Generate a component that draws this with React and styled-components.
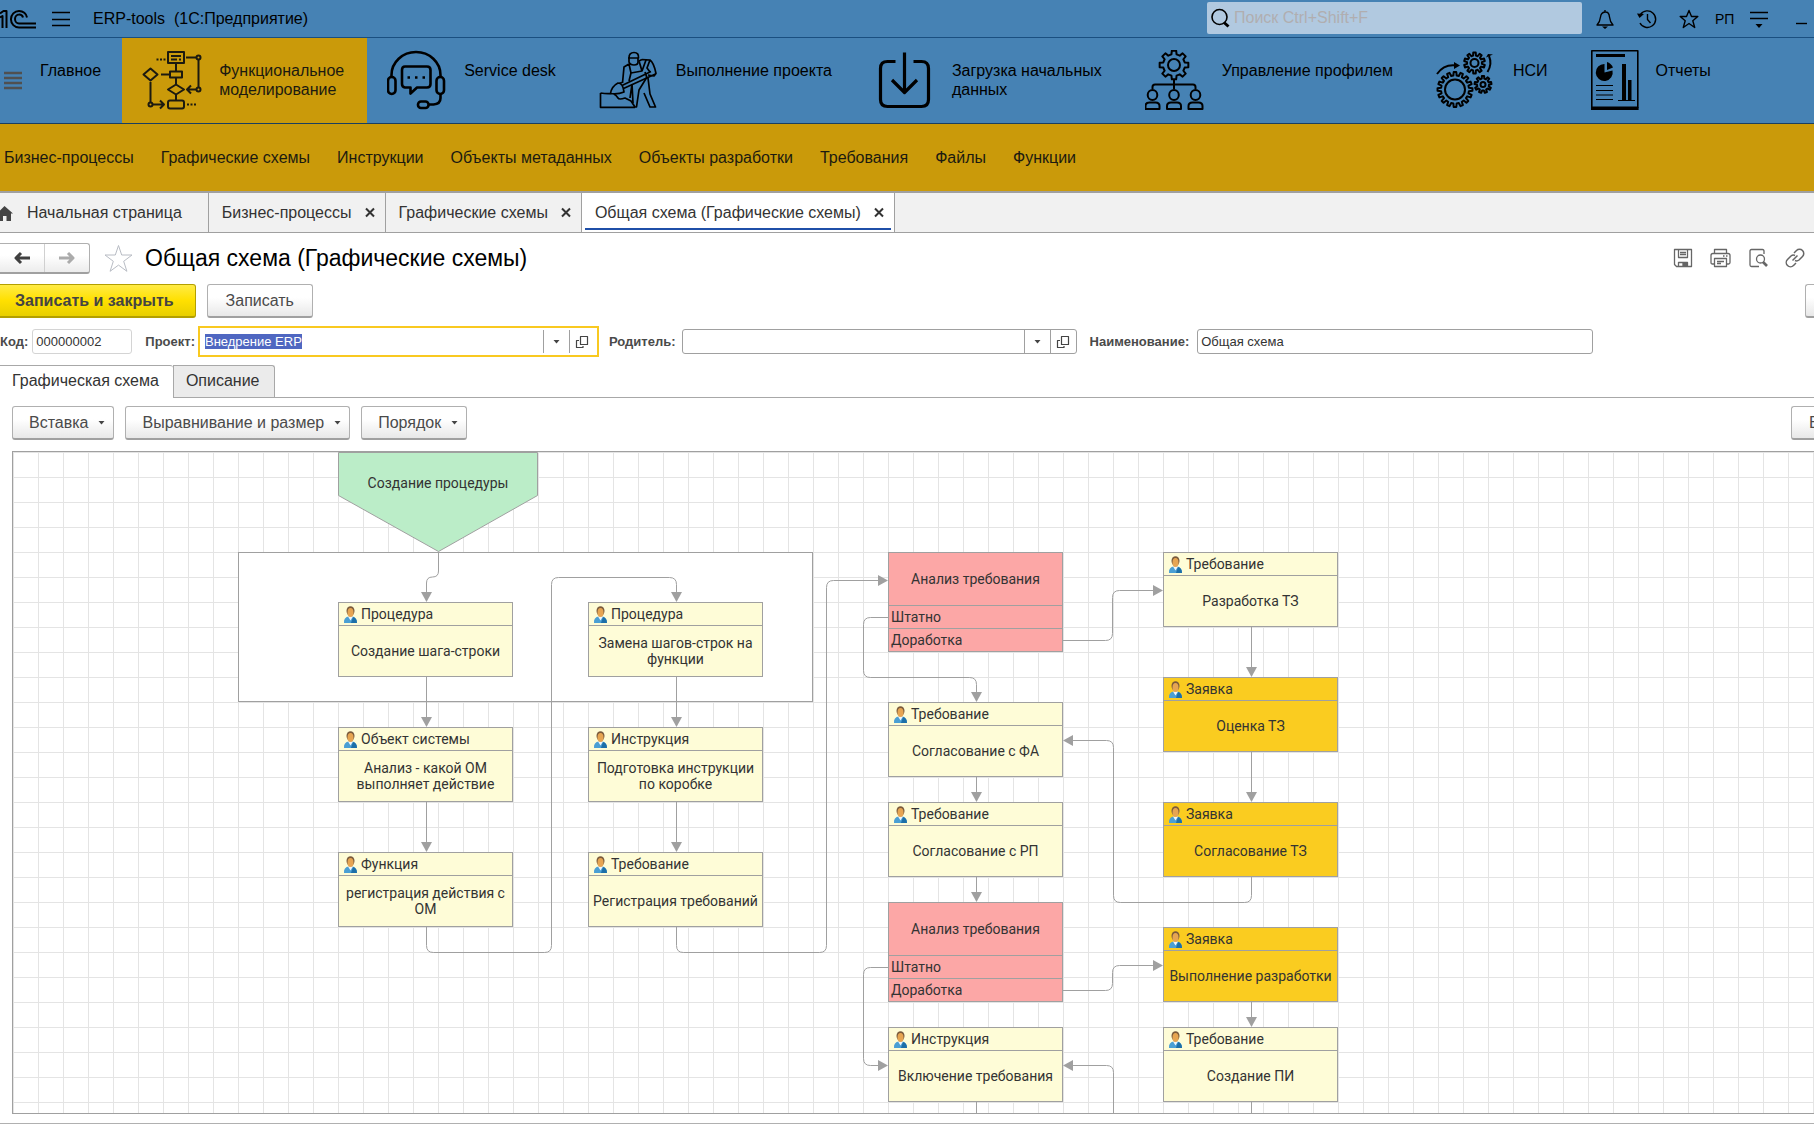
import { useEffect, useRef, useState } from "react";
import styled, { createGlobalStyle } from "styled-components";

const GlobalStyle = createGlobalStyle`
  * {
    box-sizing: border-box;
  }
  body {
    margin: 0;
    overflow: hidden;
    background-color: white;
    color: #333;
    font-family: "Liberation Sans", Arial, sans-serif;
    font-size: 16px;
  }
  button, input {
    font-family: inherit;
  }
  svg {
    display: block;
    flex-shrink: 0;
  }
`;

const Page = styled.div`
  min-height: 100vh;
  display: flex;
  flex-direction: column;
  overflow: hidden;
`;

/* title bar */
const TitleBar = styled.header`
  height: 38px;
  display: flex;
  align-items: center;
  background-color: #4682b4;
  border-bottom: 1px solid #1a4f80;
  color: black;
`;
const IconButton = styled.button`
  display: flex;
  align-items: center;
  justify-content: center;
  padding: 0;
  border: none;
  background: none;
  color: inherit;
  cursor: pointer;
`;
const MenuButton = styled(IconButton)`
  margin-left: 15px;
`;
const AppName = styled.span`
  margin-left: 23px;
  flex: 1;
  font-size: 16px;
  white-space: pre;
`;
const SearchBox = styled.label`
  width: 375px;
  height: 32px;
  margin-bottom: 1px;
  padding-left: 4px;
  display: flex;
  align-items: center;
  gap: 4px;
  border-radius: 2px;
  background-color: #b1c9e0;
`;
const SearchInput = styled.input`
  flex: 1;
  padding: 0;
  border: none;
  outline: none;
  background: none;
  font-size: 16px;
  &::placeholder {
    color: #b0aeb0;
    opacity: 1;
  }
`;
const SystemButtons = styled.div`
  display: flex;
  align-items: center;
  gap: 22px;
  padding: 0 6px 0 13px;
  font-size: 14px;
`;
const Initials = styled.span`
  width: 18px;
  margin: 0 -6px;
`;

/* sections */
const Sections = styled.nav`
  height: 86px;
  display: flex;
  background-color: #4682b4;
  border-bottom: 1px solid #1a3f60;
  color: black;
`;
const SectionsToggle = styled(IconButton)`
  margin-left: 3px;
  padding-bottom: 2px;
  color: #505050;
`;
const Section = styled.a`
  display: flex;
  gap: 17px;
  padding: 12px 23px 12px 20px;
  color: ${props => (props.$active ? "#1c1a10" : "black")};
  background-color: ${props => (props.$active ? "#ca9a0a" : "transparent")};
  font-size: 16px;
  line-height: 19px;
  text-decoration: none;
  white-space: pre;
`;
const HomeSection = styled(Section)`
  padding: 12px 21px 12px 18px;
`;
const SectionText = styled.span`
  padding-top: 11px;
`;

const Commands = styled.nav`
  height: 69px;
  display: flex;
  align-items: center;
  gap: 27px;
  padding-left: 4px;
  background-color: #ca9a0a;
  border-bottom: 2px solid #a0a0a0;
`;
const Command = styled.a`
  color: #1c1a10;
  font-size: 16px;
  text-decoration: none;
`;

/* window tabs */
const WindowTabs = styled.div`
  height: 40px;
  display: flex;
  background-color: #f1f1f1;
  border-bottom: 1px solid #a0a0a0;
`;
const WindowTab = styled.div`
  display: flex;
  align-items: center;
  gap: 13px;
  padding: 0 10px 0 13px;
  border-right: 1px solid #a0a0a0;
  background-color: ${props => (props.$active ? "white" : "transparent")};
  background-image: ${props =>
    props.$active ? "linear-gradient(#1f4fa8, #1f4fa8)" : "none"};
  background-repeat: no-repeat;
  background-size: calc(100% - 6px) 2px;
  background-position: 3px 35px;
`;
const HomeTab = styled(WindowTab)`
  gap: 14px;
  padding: 0 26px 0 0;
`;
const TabButton = styled.button`
  padding: 0;
  border: none;
  background: none;
  color: #333;
  font-size: 16px;
  cursor: pointer;
`;

/* form header */
const FormHeader = styled.div`
  display: flex;
  align-items: center;
  height: 50px;
  padding-right: 9px;
`;
const History = styled.div`
  display: flex;
  height: 31px;
  border: 1px solid #b0b0b0;
  border-left: none;
  border-bottom: 2px solid #a0a0a0;
  border-radius: 0 3px 3px 0;
  background: linear-gradient(white 40%, #ececec);
`;
const HistoryButton = styled(IconButton)`
  width: 44px;
  color: ${props => (props.disabled ? "#ababab" : "#404040")};
  & + & {
    width: 45px;
    border-left: 1px solid #d0d0d0;
  }
`;
const FavoriteButton = styled(IconButton)`
  margin: 0 12px 0 14px;
`;
const Title = styled.h1`
  margin: 0;
  flex: 1;
  color: black;
  font-size: 23px;
  font-weight: 400;
`;
const FormTools = styled.div`
  display: flex;
  gap: 17px;
  color: #666;
`;

const ButtonRow = styled.div`
  display: flex;
  gap: 11px;
  margin-top: 1px;
`;
const Button = styled.button`
  height: 34px;
  display: flex;
  align-items: center;
  gap: 10px;
  padding: 0 ${props => (props.$menu ? "8px 0 16px" : "18px")};
  border: 1px solid #b0b0b0;
  border-bottom: 2px solid #a0a0a0;
  border-radius: 3px;
  background: linear-gradient(white 40%, #e8e8e8);
  color: #4a4a4a;
  font-size: 16px;
  white-space: nowrap;
  cursor: pointer;
`;
const PrimaryButton = styled(Button)`
  padding: 0 21px 0 15px;
  border-color: #b39f00;
  border-left: none;
  border-radius: 0 3px 3px 0;
  background: linear-gradient(#ffeb45, #ffe000 50%, #e8cf00);
  color: #444;
  font-weight: 700;
`;
/* runs past the right edge of the window */
const MoreButton = styled(Button)`
  display: block;
  width: ${props => props.$width}px;
  margin-left: auto;
  padding: 0;
  overflow: hidden;
  border-right: none;
  border-radius: 3px 0 0 3px;
  text-align: left;
  text-indent: 17px;
`;

/* fields */
const Fields = styled.div`
  display: flex;
  align-items: center;
  height: 31px;
  margin-top: 8px;
`;
const Label = styled.label`
  margin: 0 ${props => props.$gap || 6}px 0 ${props => props.$before || 0}px;
  color: #4a4a4a;
  font-size: 13px;
  font-weight: 700;
`;
const Field = styled.div`
  display: flex;
  align-items: stretch;
  width: ${props => props.$width}px;
  height: 25px;
  border: 1px solid ${props => (props.$readOnly ? "#d4d4d4" : "#a0a0a0")};
  border-radius: 3px;
  &:focus-within {
    height: 31px;
    padding: 2px;
    border: 2px solid #f9c920;
    border-radius: 0;
  }
`;
const Input = styled.input`
  flex: 1;
  min-width: 0;
  padding: 0 0 0 3px;
  border: none;
  outline: none;
  background: none;
  color: #333;
  font-size: 13px;
  &::selection {
    background-color: #4f67c1;
    color: white;
  }
`;
const FieldButton = styled(IconButton)`
  width: 26px;
  border-left: 1px solid #a0a0a0;
  color: #444;
`;

/* form pages */
const FormTabs = styled.div`
  display: flex;
  height: 33px;
  margin-top: 8px;
  border-bottom: 1px solid #a8a8a8;
`;
const FormTab = styled.button`
  height: ${props => (props.$active ? 33 : 32)}px;
  padding: 0 14px 2px 12px;
  border: 1px solid #a8a8a8;
  border-left-width: ${props => (props.$active ? 0 : 1)}px;
  border-right-width: ${props => (props.$active ? 0 : 1)}px;
  border-bottom: none;
  border-radius: 0 3px 0 0;
  background-color: ${props => (props.$active ? "white" : "#ebebeb")};
  color: #333;
  font-size: 16px;
  cursor: pointer;
`;
const Toolbar = styled(ButtonRow)`
  margin: 8px 0 11px;
  padding-left: 12px;
`;

/* diagram */
const Canvas = styled.main`
  position: relative;
  flex: 1;
  margin-left: 12px;
  overflow: hidden;
  border: 1px solid #a0a0a0;
  border-right: none;
  background-image: linear-gradient(#e4e4e4 1px, transparent 1px),
    linear-gradient(90deg, #e4e4e4 1px, transparent 1px);
  background-size: 25px 25px;
  font-family: Roboto, sans-serif;
  font-size: 14px;
  line-height: 16px;
`;
const Lines = styled.svg`
  position: absolute;
  top: 0;
  left: 0;
`;
const Node = styled.div`
  position: absolute;
  left: ${props => props.$x}px;
  top: ${props => props.$y}px;
  width: 175px;
  height: ${props => props.$height || 75}px;
  display: flex;
  flex-direction: column;
  border: 1px solid #a0a0a0;
  background-color: ${props => props.$color};
`;
const NodeHeader = styled.div`
  height: 23px;
  display: flex;
  align-items: center;
  gap: 3px;
  padding-left: 4px;
  border-bottom: 1px solid #a0a0a0;
`;
const NodeBody = styled.div`
  flex: 1;
  display: flex;
  align-items: center;
  justify-content: center;
  padding-bottom: 1px;
  text-align: center;
  white-space: pre;
`;
const NodeOption = styled.div`
  height: 23px;
  padding: 3px 2px;
  border-top: 1px solid #a0a0a0;
`;
const StartText = styled.div`
  position: absolute;
  left: 325px;
  top: 23px;
  width: 200px;
  text-align: center;
`;
const StatusLine = styled.footer`
  height: 6px;
  margin-top: 9px;
  border-top: 1px solid #b0b0b0;
`;

const Svg = ({ w = 20, h = 20, sw = 1.4, children }) => (
  <svg
    width={w}
    height={h}
    viewBox={`0 0 ${w} ${h}`}
    fill="none"
    stroke="currentColor"
    strokeWidth={sw}
    strokeLinejoin="round"
    aria-hidden="true"
  >
    {children}
  </svg>
);

const Arrow = () => (
  <svg width="7" height="5" viewBox="0 0 7 5" aria-hidden="true">
    <path d="M0.500 1h6L3.500 4.500z" fill="#444" />
  </svg>
);

const Cross = () => (
  <Svg w={10} h={11} sw={2}>
    <path d="M1 1.500l8 8M9 1.500l-8 8" />
  </Svg>
);

const gear = (cx, cy, outer, inner, teeth) => {
  const step = (Math.PI * 2) / teeth;
  const point = (r, a) =>
    `${(cx + r * Math.cos(a)).toFixed(2)} ${(cy + r * Math.sin(a)).toFixed(2)}`;
  let d = "";
  for (let i = 0; i < teeth; i++) {
    const a = i * step - Math.PI / 2;
    d += `${i ? "L" : "M"}${point(inner, a - step * 0.3)}L${point(outer, a - step * 0.19)}`;
    d += `L${point(outer, a + step * 0.19)}L${point(inner, a + step * 0.3)}`;
  }
  return d + "Z";
};

const FlowIcon = () => (
  <Svg w={60} h={60} sw={2}>
    <path d="M26 2h16v11H26zM29 6h10M29 9.5h6M37 9.5h2M34 13v8M28 21.500h12v6H28zM34 27.500v7M19 24.500h9M34 44v6" />
    <path d="M1.500 24.500L8.500 18.500l7 6-7 6zM26 39.500l8-5 8 5-8 5zM8.500 32v20M44 7.500h10M56.500 10v27M54 39.500h-9M49 35.500l-4 4 4 4M11 54.500h11M18 50.500l4 4-4 4" />
    <circle cx="56.500" cy="7.500" r="2" />
    <circle cx="56.500" cy="39.500" r="2" />
    <circle cx="8.500" cy="54.500" r="2" />
    <rect x="26" y="50.500" width="16" height="8" rx="2" />
    <path d="M14.500 9.500h2M18 9.500h2M21.500 9.500h2M45 54.500h2M48.500 54.500h2M52 54.500h2" />
  </Svg>
);

const HeadsetIcon = () => (
  <Svg w={60} h={60} sw={2.6}>
    <path d="M4.500 27v-2a24.500 23 0 0 1 49 0v2M53.500 44v4q0 6-7 6.500h-5" />
    <rect x="1" y="27" width="7.500" height="17" rx="3.700" />
    <rect x="49.500" y="27" width="7.500" height="17" rx="3.700" />
    <rect x="31" y="51.500" width="10.500" height="6.500" rx="3" />
    <path d="M18 16.500h22q3.500 0 3.500 3.500v14q0 3.500-3.500 3.500H30L23.500 43.500V37.500H18q-3-.5-3-3.500V20q0-3.500 3-3.500z" />
    <path d="M20.500 27.500h2.500M28 27.500h2.500M35.500 27.500H38" />
  </Svg>
);

const WorkerIcon = () => (
  <Svg w={60} h={60} sw={1.7}>
    <path d="M1.500 43v14.300H36M1.500 43q6 1 11 .500M15 44q3 2 4 4t7 0l6 3 4 6" />
    <path d="M11.500 43.500q1-7 7.500-10.500 5 0 6 9-6 2.500-13.500 1.500zM20 33.500l3-1M23 35.500l29-14M24.500 38.500l32-14.500" />
    <path d="M29 8h10.500q.5-5.500-4.500-5.500T30 8v4q1 3 5 3t4-3V8" />
    <path d="M30 14l-5 3-1.500 16M30 14l2 9 11-2 4-11M43 9.500l8 .5q4 3 6 13.500l-2 2.500-6-1M43 21l-3-10 3-1.500M51 10l-3 8 3 4M32 23l-2 8M46 22l2 6" />
    <path d="M33 34l-2 14M33 34l1 19M48 27l-8 13-2.500 17H35M49 28l2 16 5.500 13H51l-6-14" />
  </Svg>
);

const DownloadIcon = () => (
  <Svg w={60} h={60} sw={3.2}>
    <path d="M20.500 11.500h-8q-7 0-7 7v31q0 7 7 7h34q7 0 7-7v-31q0-7-7-7h-8M29.500 2.500v40M17 30l12.500 12.500L42 30" />
  </Svg>
);

const TeamIcon = () => (
  <Svg w={60} h={60} sw={2}>
    <path d={gear(29, 15, 14.5, 11, 8)} />
    <circle cx="29" cy="15" r="6" />
    <path d="M7.500 39v-2q0-2.500 2.500-2.500h38q2.500 0 2.500 2.500v2M29 30v9" />
    {[7.5, 29, 50.5].map(x => (
      <g key={x}>
        <ellipse cx={x} cy="45" rx="4.800" ry="5" />
        <path d={`M${x - 7} 59v-3q0-3.500 4-3.500h6q4 0 4 3.500v3z`} />
      </g>
    ))}
  </Svg>
);

const GearsIcon = () => (
  <Svg w={60} h={60} sw={2}>
    <path d={gear(19, 39.5, 17.5, 14, 16)} />
    <circle cx="19" cy="39.500" r="10" />
    <path d={gear(38.5, 13, 10.5, 7.5, 10)} />
    <circle cx="38.500" cy="13" r="4" />
    <path d={gear(47, 34.5, 8.5, 6, 9)} />
    <circle cx="47" cy="34.500" r="2.500" />
    <path d="M1 24Q8 14 20 15.500M51.500 22q5-8 1.500-16" />
    <path d="M18 12l6 3.500-6 3.500zM50 7.500l2-3.500 5 .5z" fill="currentColor" stroke="none" />
  </Svg>
);

const ReportIcon = () => (
  <Svg w={48} h={60} sw={1.6}>
    <path d="M.8.8h46v56.500H.8z" />
    <path d="M5 5.500h29" strokeWidth="3" />
    <path d="M0 57h47.600v3H0zM31 14h4v36h-4zM37 30h3.500v20H37zM13.500 14v8.500l8-2a8.500 8.500 0 1 1-8-6.500z" fill="currentColor" stroke="none" />
    <path d="M16 20v-8q4 1 6 5.500z" fill="currentColor" stroke="none" />
    <path d="M5 35.500h17M5 40.500h17M5 45h17M5 49.500h17M27 50.500h17" strokeWidth="1.200" />
  </Svg>
);

const Avatar = () => (
  <svg width="15" height="17" viewBox="0 0 15 17" aria-hidden="true">
    <path d="M1 17q-.5-6 5-6.500h3q5 .5 5 6.500z" fill="#4a9fd4" />
    <path d="M8 17l2-6q4 1 4 6z" fill="#1d6fa8" />
    <path d="M5 10.500h5l-2.500 4z" fill="#eef6fb" />
    <ellipse cx="7.500" cy="5" rx="4" ry="4.800" fill="#7a5a3c" />
    <ellipse cx="7.500" cy="6.500" rx="3" ry="4.500" fill="#e6a552" />
  </svg>
);

const SECTIONS = [
  { text: "Функциональное\nмоделирование", Icon: FlowIcon },
  { text: "Service desk", Icon: HeadsetIcon },
  { text: "Выполнение проекта", Icon: WorkerIcon },
  { text: "Загрузка начальных\nданных", Icon: DownloadIcon },
  { text: "Управление профилем", Icon: TeamIcon },
  { text: "НСИ", Icon: GearsIcon },
  { text: "Отчеты", Icon: ReportIcon },
];

const COMMANDS = [
  "Бизнес-процессы",
  "Графические схемы",
  "Инструкции",
  "Объекты метаданных",
  "Объекты разработки",
  "Требования",
  "Файлы",
  "Функции",
];

const WINDOWS = [
  "Бизнес-процессы",
  "Графические схемы",
  "Общая схема (Графические схемы)",
];

const YELLOW = "#fefcd7";
const AMBER = "#facc20";
const PINK = "#fca7a6";

const NODES = [
  { x: 325, y: 150, kind: "Процедура", text: "Создание шага-строки" },
  { x: 325, y: 275, kind: "Объект системы", text: "Анализ - какой ОМ\nвыполняет действие" },
  { x: 325, y: 400, kind: "Функция", text: "регистрация действия с\nОМ" },
  { x: 575, y: 150, kind: "Процедура", text: "Замена шагов-строк на\nфункции" },
  { x: 575, y: 275, kind: "Инструкция", text: "Подготовка инструкции\nпо коробке" },
  { x: 575, y: 400, kind: "Требование", text: "Регистрация требований" },
  { x: 875, y: 250, kind: "Требование", text: "Согласование с ФА" },
  { x: 875, y: 350, kind: "Требование", text: "Согласование с РП" },
  { x: 875, y: 575, kind: "Инструкция", text: "Включение требования" },
  { x: 1150, y: 100, kind: "Требование", text: "Разработка ТЗ" },
  { x: 1150, y: 225, kind: "Заявка", text: "Оценка ТЗ", color: AMBER },
  { x: 1150, y: 350, kind: "Заявка", text: "Согласование ТЗ", color: AMBER },
  { x: 1150, y: 475, kind: "Заявка", text: "Выполнение разработки", color: AMBER },
  { x: 1150, y: 575, kind: "Требование", text: "Создание ПИ" },
];

const CHOICES = [
  { x: 875, y: 100 },
  { x: 875, y: 450 },
];

const LINKS = [
  "M425.500 100V119q0 6-6 6t-6 6V140",
  "M413.500 225V265",
  "M413.500 350V390",
  "M413.500 475V493.500q0 7 7 7H531.500q7 0 7-7V132.500q0-7 7-7H656.500q7 0 7 7V140",
  "M663.500 225V265",
  "M663.500 350V390",
  "M663.500 475V493.500q0 7 7 7H806.500q7 0 7-7V135.500q0-7 7-7H865",
  "M875 165.500H857.500q-7 0-7 7V218.500q0 7 7 7H956.500q7 0 7 7V240",
  "M1050 188.500H1092.500q7 0 7-7V145.500q0-7 7-7H1140",
  "M963.500 325V340",
  "M963.500 425V440",
  "M1238.500 175V215",
  "M1238.500 300V340",
  "M1238.500 550V565",
  "M1238.500 425V443.500q0 7-7 7H1107.500q-7 0-7-7V295.500q0-7-7-7H1060",
  "M875 515.500H857.500q-7 0-7 7V606.500q0 7 7 7H865",
  "M1050 538.500H1092.500q7 0 7-7V520.500q0-7 7-7H1140",
  "M1100.500 900V620.500q0-7-7-7H1060",
];

const TAILS = ["M963.500 650V900", "M1238.500 650V900"];

const Diagram = () => (
  <Canvas>
    <Lines width="1900" height="1000" fill="none" stroke="#a0a0a0">
      <defs>
        <marker
          id="head"
          markerUnits="userSpaceOnUse"
          markerWidth="10"
          markerHeight="12"
          refX="0"
          refY="6"
          orient="auto"
        >
          <path d="M0 0.500L10 6L0 11.500z" fill="#a0a0a0" stroke="none" />
        </marker>
      </defs>
      <rect x="225.500" y="100.500" width="574" height="149" fill="white" />
      <path d="M325.500 .5h199V43.500L425.500 99.500 325.500 43.500z" fill="#bbedc8" />
      {LINKS.map(d => (
        <path key={d} d={d} markerEnd="url(#head)" />
      ))}
      {TAILS.map(d => (
        <path key={d} d={d} />
      ))}
    </Lines>
    <StartText>Создание процедуры</StartText>
    {NODES.map(node => (
      <Node
        key={`${node.x}-${node.y}`}
        $x={node.x}
        $y={node.y}
        $color={node.color || YELLOW}
      >
        <NodeHeader>
          <Avatar />
          {node.kind}
        </NodeHeader>
        <NodeBody>{node.text}</NodeBody>
      </Node>
    ))}
    {CHOICES.map(({ x, y }) => (
      <Node key={y} $x={x} $y={y} $height={100} $color={PINK}>
        <NodeBody>Анализ требования</NodeBody>
        <NodeOption>Штатно</NodeOption>
        <NodeOption>Доработка</NodeOption>
      </Node>
    ))}
  </Canvas>
);

const OpenIcon = () => (
  <Svg w={14} h={14} sw={1.2}>
    <path d="M5.500 1.500h7v8h-7zM4 5.500H1.500v7h6.500V11" />
  </Svg>
);

const App = () => {
  const [code, setCode] = useState("000000002");
  const [project, setProject] = useState("Внедрение ERP");
  const [parent, setParent] = useState("");
  const [name, setName] = useState("Общая схема");
  const projectRef = useRef(null);

  useEffect(() => {
    projectRef.current.focus();
    projectRef.current.select();
  }, []);

  return (
    <Page>
      <GlobalStyle />
      <TitleBar>
        <Svg w={37} h={36} sw={2}>
          <path d="M0 12.500L3.500 10H6.500V27M0 16.500L2.500 15V27M27 16.500a8 7.500 0 0 0-8-6.500 8 8.200 0 0 0 0 16.500H36M23 16.500a4 4 0 0 0-4-3 4 4.500 0 0 0 0 9H36" />
        </Svg>
        <MenuButton aria-label="Меню">
          <Svg w={18} h={20}>
            <path d="M0 3.500h18M0 10.500h18M0 16.500h18" />
          </Svg>
        </MenuButton>
        <AppName>{"ERP-tools  (1С:Предприятие)"}</AppName>
        <SearchBox>
          <Svg w={19} h={20} sw={1.6}>
            <circle cx="8.500" cy="9" r="7.500" />
            <path d="M13 14.500l4.500 4" strokeWidth="3" />
          </Svg>
          <SearchInput aria-label="Поиск" placeholder="Поиск Ctrl+Shift+F" />
        </SearchBox>
        <SystemButtons>
          <IconButton aria-label="Оповещения">
            <Svg>
              <path d="M2 16q3-3 3.500-8Q6 3.500 10 3t4.500 5q.5 5 3.500 8zM10 3V1" />
              <path d="M7 17.500h6l-3 2.500z" fill="currentColor" stroke="none" />
            </Svg>
          </IconButton>
          <IconButton aria-label="История">
            <Svg>
              <path d="M3.500 5.500a8.300 8.300 0 1 1-.5 8.500M10.500 5v5.500l3 3.500" />
              <path d="M0 4.500l7 .5-4.500 4z" fill="currentColor" stroke="none" />
            </Svg>
          </IconButton>
          <IconButton aria-label="Избранное">
            <Svg>
              <path d="M10 1.500l2.500 6h6.300l-5 4.200 1.900 6.800L10 14.500l-5.700 4 1.900-6.800-5-4.200h6.300z" />
            </Svg>
          </IconButton>
          <Initials>РП</Initials>
          <IconButton aria-label="Сервис">
            <Svg>
              <path d="M1 3.500h18M1 9.500h18" />
              <path d="M6.500 15h7L10 19z" fill="currentColor" stroke="none" />
            </Svg>
          </IconButton>
          <IconButton aria-label="Свернуть">
            <Svg w={17}>
              <path d="M5 14.500h11" />
            </Svg>
          </IconButton>
        </SystemButtons>
      </TitleBar>

      <Sections>
        <SectionsToggle aria-label="Разделы">
          <Svg w={19} h={20} sw={2.4}>
            <path d="M1 3h18M1 8h18M1 13h18M1 18h18" />
          </Svg>
        </SectionsToggle>
        <HomeSection href="#">
          <SectionText>Главное</SectionText>
        </HomeSection>
        {SECTIONS.map(({ text, Icon }, i) => (
          <Section key={text} href="#" $active={i === 0}>
            <Icon />
            <SectionText>{text}</SectionText>
          </Section>
        ))}
      </Sections>

      <Commands>
        {COMMANDS.map(text => (
          <Command key={text} href="#">
            {text}
          </Command>
        ))}
      </Commands>

      <WindowTabs>
        <HomeTab>
          <Svg w={13} h={18} sw={0}>
            <path d="M-3 9.500L4.500 2l8.500 7.500h-2V17H6.500v-5H3v5H0z" fill="#444" />
          </Svg>
          <TabButton>Начальная страница</TabButton>
        </HomeTab>
        {WINDOWS.map((text, i) => (
          <WindowTab key={text} $active={i === 2}>
            <TabButton>{text}</TabButton>
            <IconButton aria-label="Закрыть">
              <Cross />
            </IconButton>
          </WindowTab>
        ))}
      </WindowTabs>

      <FormHeader>
        <History>
          <HistoryButton aria-label="Назад">
            <Svg w={18} h={14} sw={3}>
              <path d="M17 7H4M8 2L3 7l5 5" />
            </Svg>
          </HistoryButton>
          <HistoryButton aria-label="Вперед" disabled>
            <Svg w={18} h={14} sw={3}>
              <path d="M1 7h13M10 2l5 5-5 5" />
            </Svg>
          </HistoryButton>
        </History>
        <FavoriteButton aria-label="В избранное">
          <svg width="29" height="29" viewBox="0 0 29 29" fill="none" stroke="#b8bcc4">
            <path d="M14.500 1.500l3.200 9.500h10.300l-8.300 6.300 3.200 10-8.400-6.200-8.400 6.200 3.200-10L1 11h10.300z" />
          </svg>
        </FavoriteButton>
        <Title>Общая схема (Графические схемы)</Title>
        <FormTools>
          <IconButton aria-label="Сохранить">
            <Svg sw={1.3}>
              <path d="M1.500 1.500h17v17h-15l-2-2zM5.500 1.500v8h9v-8M7 4.500h6M7 6.500h6M5.500 18.500v-4h9v4" />
              <path d="M10 15h4v3h-4z" fill="currentColor" />
            </Svg>
          </IconButton>
          <IconButton aria-label="Печать">
            <Svg w={21} sw={1.3}>
              <path d="M4.500 5.500v-4h12v4M4.500 16h-2q-1.500 0-1.500-1.500v-7q0-2 2-2h15q2 0 2 2v7q0 1.500-1.500 1.500h-2M4.500 10.500h12v8h-12zM7 13.500h7M7 15.500h4M13 8h1.500M16 8h1.500" />
            </Svg>
          </IconButton>
          <IconButton aria-label="Просмотр">
            <Svg sw={1.3}>
              <path d="M16 6V3q0-1.500-1.500-1.500h-11Q2 1.500 2 3v14q0 1.500 1.500 1.500H11" />
              <circle cx="12.500" cy="11" r="4" />
              <path d="M15 14l4 4" strokeWidth="2.600" />
            </Svg>
          </IconButton>
          <IconButton aria-label="Ссылка">
            <Svg sw={1.5}>
              <path d="M9 5l2.500-2.500a4 4 0 0 1 6 6L14 12q-2 1.500-4 .5M11 15l-2.500 2.500a4 4 0 0 1-6-6L6 8q2-1.500 4-.5M7.500 12.500l5-5" />
            </Svg>
          </IconButton>
        </FormTools>
      </FormHeader>

      <ButtonRow>
        <PrimaryButton>Записать и закрыть</PrimaryButton>
        <Button>Записать</Button>
        <MoreButton $width={9} aria-label="Еще" />
      </ButtonRow>

      <Fields>
        <Label htmlFor="code" $gap={4}>
          Код:
        </Label>
        <Field $width={100} $readOnly>
          <Input id="code" value={code} onChange={e => setCode(e.target.value)} />
        </Field>
        <Label htmlFor="project" $before={13} $gap={3}>
          Проект:
        </Label>
        <Field $width={401}>
          <Input
            id="project"
            ref={projectRef}
            value={project}
            onChange={e => setProject(e.target.value)}
          />
          <FieldButton aria-label="Выбрать проект">
            <Arrow />
          </FieldButton>
          <FieldButton aria-label="Открыть проект">
            <OpenIcon />
          </FieldButton>
        </Field>
        <Label htmlFor="parent" $before={10}>
          Родитель:
        </Label>
        <Field $width={395}>
          <Input id="parent" value={parent} onChange={e => setParent(e.target.value)} />
          <FieldButton aria-label="Выбрать родителя">
            <Arrow />
          </FieldButton>
          <FieldButton aria-label="Открыть родителя">
            <OpenIcon />
          </FieldButton>
        </Field>
        <Label htmlFor="name" $before={13} $gap={8}>
          Наименование:
        </Label>
        <Field $width={396}>
          <Input id="name" value={name} onChange={e => setName(e.target.value)} />
        </Field>
      </Fields>

      <FormTabs>
        <FormTab $active>Графическая схема</FormTab>
        <FormTab>Описание</FormTab>
      </FormTabs>

      <Toolbar>
        {["Вставка", "Выравнивание и размер", "Порядок"].map(text => (
          <Button key={text} $menu>
            {text}
            <Arrow />
          </Button>
        ))}
        <MoreButton $width={23}>Еще</MoreButton>
      </Toolbar>

      <Diagram />
      <StatusLine />
    </Page>
  );
};

export default App;
